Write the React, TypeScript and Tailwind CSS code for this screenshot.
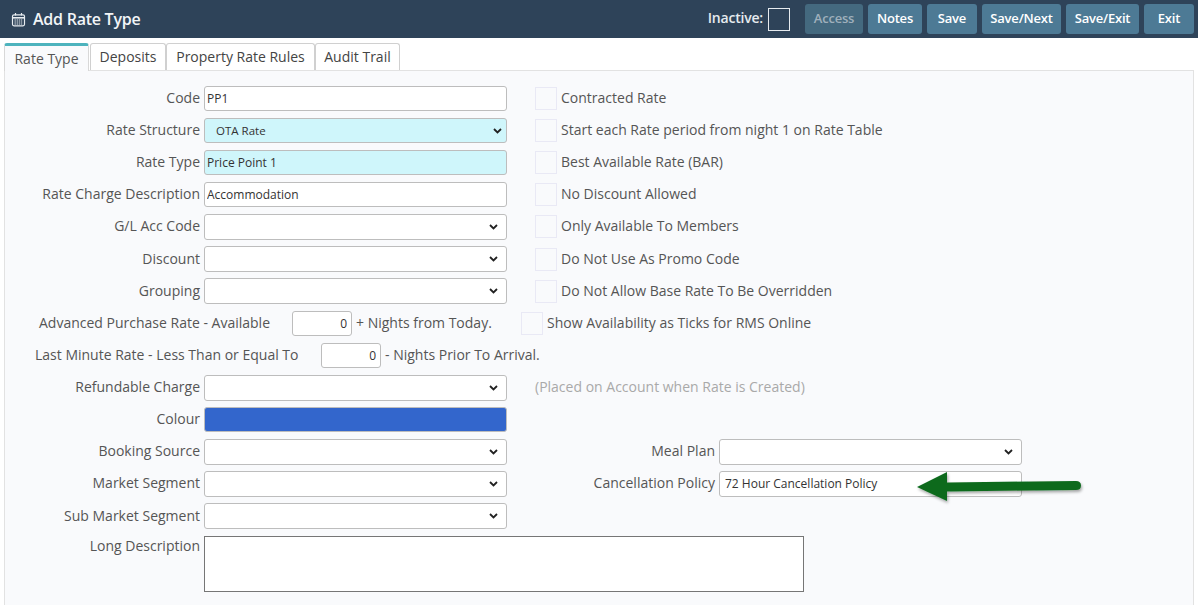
import React from 'react'

const font = { fontFamily: '"Open Sans", "Liberation Sans", sans-serif' }

const inputCls = "block h-[25px] w-[303px] rounded-[3px] border border-[#bdbdbd] bg-white px-[2px] text-[12px] text-[#333] outline-none"
const selectCls = "block h-[26px] w-[303px] appearance-none rounded-[3px] border border-[#bdbdbd] bg-white text-[12px] text-[#333] outline-none"

const Row = ({ children }: { children: React.ReactNode }) => (
    <div className="flex h-[32.125px] items-center">{children}</div>
)

const Label = ({ text }: { text: string }) => (
    <label className="w-[195px] pb-[2px] text-right text-[14px] text-[#555]">{text}</label>
)

const Field = ({ label, children }: { label: string, children: React.ReactNode }) => (
    <div className="flex items-center gap-[4px]">
        <Label text={label} />
        {children}
    </div>
)

const Check = ({ text, className }: { text: string, className: string }) => (
    <div className={`flex items-center ${className}`}>
        <span className="block h-[23px] w-[22px] border border-[#e9e9f5] bg-[#f9fafc]"></span>
        <span className="ml-[4px] pb-[2px] text-[14px] text-[#555]">{text}</span>
    </div>
)

const Chevron = ({ className }: { className: string }) => (
    <svg className={`pointer-events-none absolute ${className}`} width="9" height="6" viewBox="0 0 9 6" fill="none" stroke="#222" strokeWidth="1.8">
        <path d="M1 1 L4.5 4.5 L8 1" />
    </svg>
)

const EmptySelect = () => (
    <div className="relative">
        <select className={selectCls}><option></option></select>
        <Chevron className="right-[9px] top-[10px]" />
    </div>
)

const GreenArrow = () => (
    <svg className="absolute left-[910px] top-[466px]" width="180" height="44" viewBox="0 0 180 44">
        <defs>
            <filter id="arrowShadow" x="-10%" y="-30%" width="120%" height="170%">
                <feDropShadow dx="1" dy="2" stdDeviation="1.5" floodColor="#000" floodOpacity="0.35" />
            </filter>
        </defs>
        <path d="M7 21 L37 6 L37 16.5 L166 15 Q171 15 171 19.5 Q171 24 166 24 L37 25.5 L37 35 Z" fill="#0f6b1f" filter="url(#arrowShadow)" />
    </svg>
)

const buttons = [
    { text: 'Access', w: 'w-[58px]', cls: 'bg-[#44697f] text-[#9fb0bc]' },
    { text: 'Notes', w: 'w-[54px]', cls: 'bg-[#4d7a95] text-white' },
    { text: 'Save', w: 'w-[50px]', cls: 'bg-[#4d7a95] text-white' },
    { text: 'Save/Next', w: 'w-[79px]', cls: 'bg-[#4d7a95] text-white' },
    { text: 'Save/Exit', w: 'w-[73px]', cls: 'bg-[#4d7a95] text-white' },
    { text: 'Exit', w: 'w-[50px]', cls: 'bg-[#4d7a95] text-white' },
]

const tabs = [
    { text: 'Deposits', w: 'w-[76px]' },
    { text: 'Property Rate Rules', w: 'w-[149px]' },
    { text: 'Audit Trail', w: 'w-[85px]' },
]

const App = () => {
    return (
        <div className="relative h-[605px] w-[1198px] overflow-hidden bg-white" style={font}>
            <div className="flex h-[38px] items-center bg-[#2e4359] pl-[11px] pr-[4px]">
                <svg width="15" height="15" viewBox="0 0 15 15" fill="none" stroke="#e8edf1" strokeWidth="1.2">
                    <rect x="1.5" y="2.8" width="12" height="11" rx="1.5" />
                    <path d="M1.5 5.8 H13.5" strokeWidth="1.6" />
                    <path d="M4.5 1 V3.5 M10.5 1 V3.5" />
                    <path d="M3.5 8 H11.5 M3.5 10 H11.5 M3.5 12 H11.5" strokeWidth="1.1" strokeDasharray="1.4 0.7" />
                </svg>
                <span className="ml-[7px] pb-[1px] text-[16px] font-semibold tracking-[-0.25px] text-[#f2f5f7]">Add Rate Type</span>
                <div className="ml-auto flex items-center">
                    <span className="pb-[3px] text-[14px] font-semibold tracking-[-0.2px] text-[#e6ebef]">Inactive:</span>
                    <span className="ml-[5px] mr-[15px] block h-[23px] w-[22px] border border-[#e6ebef]"></span>
                    <div className="flex gap-[5px] pb-[1px]">
                        {buttons.map(b => (
                            <button key={b.text} className={`h-[30px] rounded-[3px] text-[13px] font-semibold tracking-[-0.2px] ${b.w} ${b.cls}`}>{b.text}</button>
                        ))}
                    </div>
                </div>
            </div>

            <div className="flex h-[32px] items-end pl-[4px]">
                <div className="z-10 mb-[-1px] mr-[1px] flex h-[28px] w-[85px] items-center justify-center rounded-t-[3px] border-x border-t-[3px] border-x-[#d8d8d8] border-t-[#4db3bd] bg-[#f9fafc] text-[14px] text-[#555]">Rate Type</div>
                {tabs.map(t => (
                    <div key={t.text} className={`flex h-[27px] items-center justify-center rounded-t-[3px] border border-b-0 border-[#d0d0d0] bg-white pb-[2px] text-[14px] text-[#444] ${t.w}`}>{t.text}</div>
                ))}
            </div>

            <div className="ml-[4px] h-[540px] w-[1190px] border border-[#e2e2e2] bg-[#f9fafc] pt-[11.325px]">
                <Row>
                    <Field label="Code"><input className={inputCls} defaultValue="PP1" /></Field>
                    <Check text="Contracted Rate" className="ml-[28px]" />
                </Row>
                <Row>
                    <Field label="Rate Structure">
                        <div className="relative">
                            <select className={`${selectCls} !h-[25px] !bg-[#cff6fb] pl-[11px] !text-[11.5px]`}><option>OTA Rate</option></select>
                            <Chevron className="right-[5px] top-[10px]" />
                        </div>
                    </Field>
                    <Check text="Start each Rate period from night 1 on Rate Table" className="ml-[28px]" />
                </Row>
                <Row>
                    <Field label="Rate Type"><input className={`${inputCls} !bg-[#cff6fb]`} defaultValue="Price Point 1" /></Field>
                    <Check text="Best Available Rate (BAR)" className="ml-[28px]" />
                </Row>
                <Row>
                    <Field label="Rate Charge Description"><input className={inputCls} defaultValue="Accommodation" /></Field>
                    <Check text="No Discount Allowed" className="ml-[28px]" />
                </Row>
                <Row>
                    <Field label="G/L Acc Code"><EmptySelect /></Field>
                    <Check text="Only Available To Members" className="ml-[28px]" />
                </Row>
                <Row>
                    <Field label="Discount"><EmptySelect /></Field>
                    <Check text="Do Not Use As Promo Code" className="ml-[28px]" />
                </Row>
                <Row>
                    <Field label="Grouping"><EmptySelect /></Field>
                    <Check text="Do Not Allow Base Rate To Be Overridden" className="ml-[28px]" />
                </Row>
                <Row>
                    <span className="ml-[34px] w-[253px] pb-[2px] text-[14px] text-[#555]">Advanced Purchase Rate - Available</span>
                    <input className="h-[25px] w-[60px] rounded-[3px] border border-[#bdbdbd] bg-white px-[4px] text-right text-[12px] text-[#333]" defaultValue="0" />
                    <span className="ml-[4px] w-[165px] pb-[2px] text-[14px] text-[#555]">+ Nights from Today.</span>
                    <Check text="Show Availability as Ticks for RMS Online" className="" />
                </Row>
                <Row>
                    <span className="ml-[30px] w-[286px] pb-[2px] text-[14px] text-[#555]">Last Minute Rate - Less Than or Equal To</span>
                    <input className="h-[25px] w-[60px] rounded-[3px] border border-[#bdbdbd] bg-white px-[4px] text-right text-[12px] text-[#333]" defaultValue="0" />
                    <span className="ml-[4px] pb-[2px] text-[14px] text-[#555]">- Nights Prior To Arrival.</span>
                </Row>
                <Row>
                    <Field label="Refundable Charge"><EmptySelect /></Field>
                    <span className="ml-[28px] pb-[2px] text-[14px] text-[#a9a9a9]">(Placed on Account when Rate is Created)</span>
                </Row>
                <Row>
                    <Field label="Colour"><div className="h-[25px] w-[303px] rounded-[3px] border border-[#bdbdbd] bg-[#3366cc]"></div></Field>
                </Row>
                <Row>
                    <Field label="Booking Source"><EmptySelect /></Field>
                    <div className="ml-[28px] flex w-[180px] items-center justify-end pb-[2px] text-[14px] text-[#555]">Meal Plan</div>
                    <div className="ml-[4px]"><EmptySelect /></div>
                </Row>
                <Row>
                    <Field label="Market Segment"><EmptySelect /></Field>
                    <div className="ml-[28px] flex w-[180px] items-center justify-end pb-[2px] text-[14px] text-[#555]">Cancellation Policy</div>
                    <div className="ml-[4px]">
                        <input className={`${inputCls} !h-[26px] !px-[5px]`} defaultValue="72 Hour Cancellation Policy" />
                    </div>
                </Row>
                <Row>
                    <Field label="Sub Market Segment"><EmptySelect /></Field>
                </Row>
                <div className="mt-[3.9px] flex items-start gap-[4px]">
                    <label className="w-[195px] text-right text-[14px] leading-[20px] text-[#555]">Long Description</label>
                    <textarea className="block h-[56px] w-[600px] resize-none border border-[#767676] bg-white"></textarea>
                </div>
            </div>
            <GreenArrow />
        </div>
    )
}
export default App
